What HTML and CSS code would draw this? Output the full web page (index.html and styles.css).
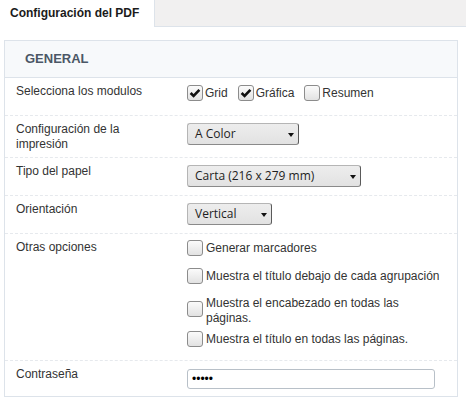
FILE: index.html
```html
<!DOCTYPE html>
<html lang="es">
<head>
<meta charset="utf-8">
<title>Configuración del PDF</title>
<link rel="stylesheet" href="styles.css">
</head>
<body>
<div class="tabs">
  <div class="tab active">Configuración del PDF</div>
  <div class="tab-fill"></div>
</div>
<div class="panel">
  <div class="panel-header">GENERAL</div>

  <div class="row">
    <div class="label">Selecciona los modulos</div>
    <div class="ctl">
      <div class="checks">
        <label class="check"><span class="cb on"><svg viewBox="0 0 16 16"><path d="M3 8 L6.4 11.4 L13 4.4" /></svg></span>Grid</label>
        <label class="check"><span class="cb on"><svg viewBox="0 0 16 16"><path d="M3 8 L6.4 11.4 L13 4.4" /></svg></span>Gráfica</label>
        <label class="check"><span class="cb"></span>Resumen</label>
      </div>
    </div>
  </div>

  <div class="row">
    <div class="label">Configuración de la impresión</div>
    <div class="ctl">
      <span class="select w-color">A Color</span>
    </div>
  </div>

  <div class="row">
    <div class="label">Tipo del papel</div>
    <div class="ctl">
      <span class="select w-paper">Carta (216 x 279 mm)</span>
    </div>
  </div>

  <div class="row">
    <div class="label">Orientación</div>
    <div class="ctl">
      <span class="select w-orient">Vertical</span>
    </div>
  </div>

  <div class="row">
    <div class="label">Otras opciones</div>
    <div class="ctl opts">
      <label class="opt"><span class="cb"></span><span class="opt-text">Generar marcadores</span></label>
      <label class="opt"><span class="cb"></span><span class="opt-text">Muestra el título debajo de cada agrupación</span></label>
      <label class="opt wrap"><span class="cb"></span><span class="opt-text">Muestra el encabezado en todas las páginas.</span></label>
      <label class="opt"><span class="cb"></span><span class="opt-text">Muestra el título en todas las páginas.</span></label>
    </div>
  </div>

  <div class="row last">
    <div class="label">Contraseña</div>
    <div class="ctl pw">
      <input class="password" type="password" value="12345">
    </div>
  </div>
</div>
</body>
</html>
```

FILE: styles.css
```css
* { box-sizing: border-box; }
html, body { margin: 0; padding: 0; background: #fff; }
body {
  font-family: "Liberation Sans", Arial, sans-serif;
  font-size: 12px;
  color: #333;
}

.tabs { display: flex; height: 27px; }
.tab.active {
  width: 154px;
  padding-left: 10px;
  line-height: 26px;
  font-weight: bold;
  font-size: 12px;
  color: #1b1b1b;
  background: #fff;
}
.tab-fill {
  flex: 1;
  background: #f1f0f0;
  border-left: 1px solid #dde3ea;
  border-bottom: 1px solid #dde3ea;
}

.panel {
  margin: 13px 8px 0 4px;
  border: 1px solid #dde3ea;
}
.panel-header {
  height: 37px;
  line-height: 36px;
  padding-left: 20px;
  background: #f7f9fb;
  border-bottom: 1px solid #dde3ea;
  font-weight: bold;
  font-size: 13px;
  color: #4b5766;
}

.row {
  display: grid;
  grid-template-columns: 171px 1fr;
  padding-left: 11px;
  border-bottom: 1px dashed #e6e9ed;
}
.row.last { border-bottom: none; }
.label {
  padding: 6px 30px 5px 0;
  line-height: 15px;
  color: #333;
}
.ctl { padding: 7px 0 8px; }

.checks { display: flex; height: 22px; align-items: flex-start; }
.check { display: flex; align-items: center; height: 16px; margin-right: 10px; line-height: 16px; }
.check .cb { margin-right: 2px; }

.cb {
  display: inline-block;
  flex: none;
  width: 16px;
  height: 16px;
  border: 1px solid #8c8c8c;
  border-radius: 3px;
  background: linear-gradient(#fbfbfb, #e2e2e2);
}
.cb svg {
  display: block;
  width: 14px;
  height: 14px;
}
.cb svg path {
  fill: none;
  stroke: #111;
  stroke-width: 3;
  stroke-linecap: butt;
  stroke-linejoin: miter;
}

.select {
  display: inline-block;
  position: relative;
  height: 22px;
  line-height: 20px;
  padding-left: 7px;
  font-family: "Open Sans", sans-serif;
  font-size: 12px;
  color: #1e1e1e;
  background: linear-gradient(#ededed, #e2e2e2);
  border: 1px solid #b5b5b5;
  border-right-color: #5a5a5a;
  border-bottom-color: #8a8a8a;
  border-radius: 3px;
}
.select::after {
  content: "";
  position: absolute;
  right: 4px;
  top: 9px;
  border-left: 3px solid transparent;
  border-right: 3px solid transparent;
  border-top: 4px solid #111;
}
.w-color { width: 112px; }
.w-paper { width: 174px; }
.w-orient { width: 85px; }

.opts { padding: 0 0 7px; }
.opt {
  display: flex;
  align-items: center;
  padding: 6px 0;
  line-height: 15px;
  color: #333;
}
.opt .cb { margin-right: 3px; }
.opt.wrap { align-items: flex-start; padding-bottom: 0; margin-bottom: -1px; }
.opt.wrap .cb { margin-top: 5px; }
.opt-text { max-width: 238px; }

.pw { padding: 8px 22px 7px 0; }
.password {
  display: block;
  width: 248px;
  height: 20px;
  margin: 0;
  padding: 0 0 0 4px;
  border: 1px solid #b8c0c8;
  border-radius: 3px;
  font-family: "Liberation Sans", Arial, sans-serif;
  font-size: 12px;
  letter-spacing: 0;
  color: #000;
  background: #fff;
}
```
